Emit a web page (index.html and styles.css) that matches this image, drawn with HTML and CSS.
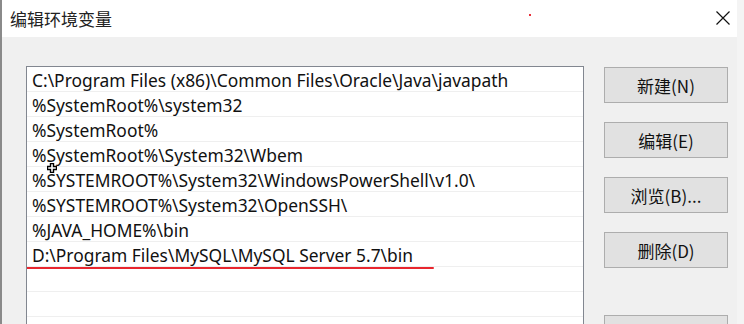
FILE: index.html
```html
<!DOCTYPE html>
<html lang="zh-CN">
	<head>
		<meta charset="UTF-8" />
		<title>编辑环境变量</title>
		<link rel="stylesheet" href="styles.css">
	</head>
	<body>
		<div class="window">
			<div class="titlebar">
				<span class="title">编辑环境变量</span>
				<span class="dot"></span>
				<svg class="close" width="14" height="14" viewBox="0 0 14 14">
					<path d="M0.5 0.5 L13.5 13.5 M13.5 0.5 L0.5 13.5" stroke="#111" stroke-width="1.2" fill="none" />
				</svg>
			</div>
			<div class="content">
				<div class="list">
					<div class="row">C:\Program Files (x86)\Common Files\Oracle\Java\javapath</div>
					<div class="row">%SystemRoot%\system32</div>
					<div class="row">%SystemRoot%</div>
					<div class="row">%SystemRoot%\System32\Wbem</div>
					<div class="row">%SYSTEMROOT%\System32\WindowsPowerShell\v1.0\</div>
					<div class="row">%SYSTEMROOT%\System32\OpenSSH\</div>
					<div class="row">%JAVA_HOME%\bin</div>
					<div class="row marked">D:\Program Files\MySQL\MySQL Server 5.7\bin</div>
					<div class="row"></div>
					<div class="row"></div>
					<div class="row"></div>
					<svg class="cursor" width="10" height="10" viewBox="0 0 10 10">
						<path d="M3.5 0.5 H6.5 V3.5 H9.5 V6.5 H6.5 V9.5 H3.5 V6.5 H0.5 V3.5 H3.5 Z" fill="#fff" stroke="#000" stroke-width="1.4" />
					</svg>
				</div>
				<div class="buttons">
					<button>新建(N)</button>
					<button>编辑(E)</button>
					<button>浏览(B)...</button>
					<button>删除(D)</button>
					<button class="spaced"></button>
				</div>
			</div>
		</div>
	</body>
</html>
```

FILE: styles.css
```css
body {
	margin: 0;
	width: 744px;
	height: 324px;
	overflow: hidden;
	font-family: "Noto Sans", "Noto Sans CJK SC", sans-serif;
	background-color: #f0f0f0;
}
.window {
	height: 324px;
	overflow: hidden;
	border-left: 2px solid #8a8a8a;
	border-right: 7px solid #f4f4f4;
}
.titlebar {
	position: relative;
	height: 37px;
	background-color: white;
	display: flex;
	align-items: center;
}
.title {
	margin-left: 8px;
	font-family: "Noto Sans CJK SC", sans-serif;
	font-size: 17px;
	color: #222;
}
.dot {
	position: absolute;
	left: 527px;
	top: 14px;
	width: 2px;
	height: 2px;
	background-color: #e8303a;
}
.close {
	position: absolute;
	left: 714px;
	top: 11px;
}
.content {
	display: flex;
	height: 258px;
	padding: 29px 0 0 24px;
	box-sizing: border-box;
}
.list {
	position: relative;
	flex-shrink: 0;
	width: 558px;
	height: 258px;
	overflow: hidden;
	background-color: white;
	border: 1px solid #828790;
	border-bottom: none;
	box-sizing: border-box;
}
.row {
	height: 24px;
	line-height: 26px;
	padding-left: 5px;
	border-bottom: 1px solid #efefef;
	font-size: 17.4px;
	color: #111;
	white-space: nowrap;
}
.marked {
	position: relative;
}
.marked::after {
	content: "";
	position: absolute;
	left: -2px;
	top: 25px;
	width: 409px;
	height: 2px;
	border-radius: 1px;
	background-color: #e8262e;
}
.cursor {
	position: absolute;
	left: 20px;
	top: 96px;
}
.buttons {
	display: flex;
	flex-direction: column;
	gap: 19px;
	margin-left: 20px;
	padding-top: 1px;
}
button {
	flex-shrink: 0;
	width: 124px;
	height: 36px;
	background-color: #e1e1e1;
	border: 1px solid #adadad;
	font-family: "Noto Sans CJK SC", sans-serif;
	font-size: 17px;
	color: #111;
	padding: 0;
}
.spaced {
	margin-top: 28px;
}
```
